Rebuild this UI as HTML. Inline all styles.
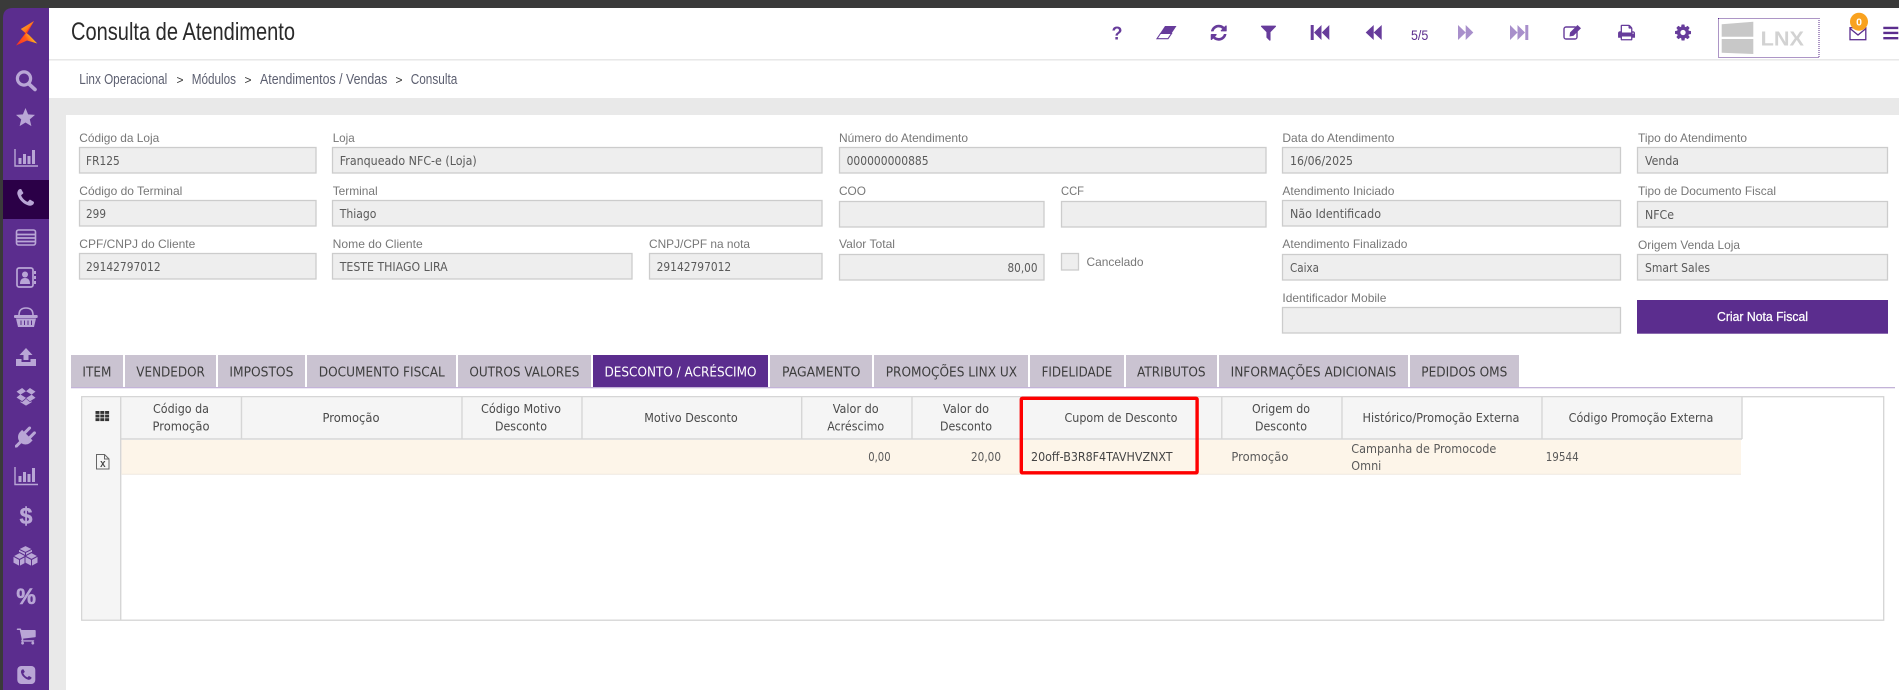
<!DOCTYPE html>
<html lang="pt-BR">
<head>
<meta charset="utf-8">
<title>Consulta de Atendimento</title>
<style>
html,body{margin:0;padding:0;background:#fff;width:1899px;height:690px;overflow:hidden}
svg{display:block}
.l{font:12px "Liberation Sans",sans-serif;fill:#777}
.v{font:12px "DejaVu Sans","Liberation Sans",sans-serif;fill:#5a5a5a}
.tab{font:13px "DejaVu Sans","Liberation Sans",sans-serif;fill:#3d3d3d}
.h{font:12px "DejaVu Sans","Liberation Sans",sans-serif;fill:#4a4a4a}
.b{font:15px "Liberation Sans",sans-serif;fill:#5c5f70}
.i{fill:#eee;stroke:#ccc;stroke-width:1.3}
.t{fill:#cac3d1}
.s{fill:#b9a6d6}
.p{fill:#673c9b}
.q{fill:#a88fcb}
.ln{stroke:#d6d6d6;stroke-width:1.4}
</style>
</head>
<body>
<svg xmlns="http://www.w3.org/2000/svg" width="1899" height="690" viewBox="0 0 1899 690">
<defs>
<linearGradient id="g1" x1="0" y1="1" x2="1" y2="0.6"><stop offset="0" stop-color="#ff2d1e"/><stop offset=".6" stop-color="#ff5a1e"/><stop offset="1" stop-color="#ffd21e"/></linearGradient>
<linearGradient id="g2" x1="0" y1="0" x2="1" y2="1"><stop offset="0" stop-color="#ffc21e"/><stop offset="1" stop-color="#ff3a1e"/></linearGradient>
</defs>

<!-- chrome -->
<rect width="1899" height="690" fill="#fff"/>
<rect width="1899" height="8" fill="#3a3a3a"/>
<rect y="0" width="3" height="690" fill="#3a3a3a"/>
<rect x="3" y="8" width="10" height="10" fill="#3a3a3a"/>
<path d="M3 690V18q0-10 10-10H49V690z" fill="#5b2d8e"/>
<rect x="3" y="180" width="46" height="39" fill="#2b0047"/>

<!-- header -->
<rect x="49" y="59" width="1850" height="1.6" fill="#e8e8e8"/>
<rect x="49" y="98" width="1850" height="592" fill="#e9e9e9"/>
<rect x="66" y="115" width="1833" height="575" fill="#fff"/>
<text x="71" y="40" textLength="224" lengthAdjust="spacingAndGlyphs" style="font:25px 'Liberation Sans',sans-serif;fill:#2a2a2a">Consulta de Atendimento</text>

<text class="b" x="79.3" y="84" textLength="88" lengthAdjust="spacingAndGlyphs">Linx Operacional</text>
<text class="b" x="176.5" y="84" textLength="7" lengthAdjust="spacingAndGlyphs" style="font-size:12px;fill:#333">&gt;</text>
<text class="b" x="191.7" y="84" textLength="44.3" lengthAdjust="spacingAndGlyphs">Módulos</text>
<text class="b" x="244.5" y="84" textLength="7" lengthAdjust="spacingAndGlyphs" style="font-size:12px;fill:#333">&gt;</text>
<text class="b" x="260" y="84" textLength="127.3" lengthAdjust="spacingAndGlyphs">Atendimentos / Vendas</text>
<text class="b" x="395.5" y="84" textLength="7" lengthAdjust="spacingAndGlyphs" style="font-size:12px;fill:#333">&gt;</text>
<text class="b" x="410.7" y="84" textLength="46.6" lengthAdjust="spacingAndGlyphs">Consulta</text>

<!-- sidebar icons -->
<polygon points="34,21 20.8,29 26.5,34" fill="url(#g2)"/>
<polygon points="34,21 26.5,34 16,45.5 24,35" fill="#ff3a1e"/>
<polygon points="26.5,33 16,45.5 27,40.5 37.3,43.5 29,35" fill="url(#g1)"/>
<circle cx="24" cy="78.5" r="6.6" fill="none" stroke="#b9a6d6" stroke-width="3.2"/>
<path d="M29 84l6 5.5" stroke="#b9a6d6" stroke-width="3.6" stroke-linecap="round"/>
<polygon class="s" points="25.5,108 28.1,114.4 35,114.9 29.8,119.4 31.4,126.1 25.5,122.5 19.6,126.1 21.2,119.4 16,114.9 22.9,114.4"/>
<path d="M15 149v17h23" fill="none" stroke="#b9a6d6" stroke-width="1.4"/>
<path class="s" d="M18.5 158h3v6h-3zM23 154h3v10h-3zM27.5 156h3v8h-3zM32 150h3v14h-3z"/>
<path class="s" transform="translate(15 187.5) scale(.01186)" d="M1600 1240q0 27-10 70.5t-21 68.5q-21 50-122 106-94 51-186 51-27 0-53-3.5t-57.5-12.5-47-14.5-55.5-20.5-49-18q-98-35-175-83-127-79-264-216t-216-264q-48-77-83-175-3-9-18-49t-20.5-55.5-14.5-47-12.5-57.5-3.5-53q0-92 51-186 56-101 106-122 25-11 68.5-21t70.5-10q14 0 21 3 18 6 53 76 11 19 30 54t35 63.5 31 53.5q3 4 17.5 25t21.5 35.5 7 28.5q0 20-28.5 50t-62 55-62 53-28.5 46q0 9 5 22.5t8.5 20.5 14 24 11.5 19q76 137 174 235t235 174q2 1 19 11.5t24 14 20.5 8.5 22.5 5q18 0 46-28.5t53-62 55-62 50-28.5q14 0 28.5 7t35.5 21.5 25 17.5q25 15 53.5 31t63.5 35 54 30q70 35 76 53 3 7 3 21z"/>
<!-- list icon -->
<rect x="16.5" y="230" width="19" height="15" rx="2" fill="none" stroke="#b9a6d6" stroke-width="1.6"/>
<path d="M17 234.5h18M17 238h18M17 241.5h18" stroke="#b9a6d6" stroke-width="1.8"/>
<!-- contacts -->
<rect x="17" y="268" width="16" height="19" rx="2" fill="none" stroke="#b9a6d6" stroke-width="1.7"/>
<circle cx="25" cy="274.5" r="3" class="s"/>
<path class="s" d="M20 284q0-6 5-6t5 6zM34 271h2v3h-2zM34 276h2v3h-2zM34 281h2v3h-2z"/>
<!-- basket -->
<path d="M19 315q0-7 7-7t7 7" fill="none" stroke="#b9a6d6" stroke-width="1.6"/>
<rect x="14" y="315" width="23.7" height="3" rx="1" class="s"/>
<polygon class="s" points="16,318.5 36,318.5 34,327 18,327"/>
<path d="M21 320.5v4.5M24.5 320.5v4.5M28 320.5v4.5M31.5 320.5v4.5" stroke="#5b2d8e" stroke-width="1"/>
<!-- upload -->
<path class="s" d="M26 348l6.5 7h-4v5h-5v-5h-4zM16 359h5.5v3h9v-3h5.5v7h-20z"/>
<!-- dropbox -->
<path class="s" transform="translate(15.8 386.3) scale(.0114)" d="M402 707l494 305-342 285-490-319zm986 589v108l-490 293v1l-1-1-1 1v-1l-489-293v-108l147 96 342-284v-2l1 1 1-1v2l343 284zm-834-1151l342 285-494 304-338-270zm836 589l338 271-489 319-343-285zm-151-589l489 319-338 270-494-304z"/>
<!-- plug -->
<path class="s" transform="translate(15 426.5) scale(.0117)" d="M1755 453q37 38 37 90.5t-37 90.5l-401 400 150 150-160 160q-163 163-389.5 186.5t-411.5-100.5l-362 362h-181v-181l362-362q-124-185-100.5-411.5t186.5-389.5l160-160 150 150 400-401q38-37 91-37t90 37 37 90.5-37 90.5l-400 401 234 234 401-400q38-37 91-37t90 37z"/>
<!-- chart 2 -->
<path d="M15 467v17.5h23" fill="none" stroke="#b9a6d6" stroke-width="1.4"/>
<path class="s" d="M18.5 476h3v6h-3zM23 472h3v10h-3zM27.5 474h3v8h-3zM32 468h3v14h-3z"/>
<text x="26" y="524" text-anchor="middle" stroke="#b9a6d6" stroke-width=".5" style="font:bold 23px 'Liberation Sans',sans-serif;fill:#b9a6d6">$</text>
<!-- cubes -->
<g class="s" stroke="#5b2d8e" stroke-width="1">
<polygon points="25.5,545.5 32.5,549 32.5,556 25.5,559.5 18.5,556 18.5,549"/>
<path fill="none" d="M18.5 549l7 3.5 7-3.5M25.500 552.500v7"/>
<polygon points="19.5,552.5 26,556 26,563 19.5,566.500 13,563 13,556"/>
<path fill="none" d="M13 556l6.500 3.500 6.500-3.500M19.500 559.500v7"/>
<polygon points="31.5,552.5 38,556 38,563 31.5,566.500 25,563 25,556"/>
<path fill="none" d="M25 556l6.500 3.500 6.500-3.500M31.500 559.500v7"/>
</g>
<text x="26.2" y="604" text-anchor="middle" stroke="#b9a6d6" stroke-width=".6" style="font:bold 22px 'Liberation Sans',sans-serif;fill:#b9a6d6">%</text>
<path class="s" transform="translate(16 625.6) scale(.0114)" d="M704 1536q0 52-38 90t-90 38-90-38-38-90 38-90 90-38 90 38 38 90zm896 0q0 52-38 90t-90 38-90-38-38-90 38-90 90-38 90 38 38 90zm128-1088v512q0 24-16.5 42.5t-40.5 21.5l-1044 122q13 60 13 70 0 16-24 64h920q26 0 45 19t19 45-19 45-45 19h-1024q-26 0-45-19t-19-45q0-11 8-31.5t16-36 21.5-40 15.5-29.5l-177-823h-204q-26 0-45-19t-19-45 19-45 45-19h256q16 0 28.5 6.5t19.5 15.5 13 24.5 8 26 5.5 29.5 4.5 26h1201q26 0 45 19t19 45z"/>
<rect x="17.3" y="666" width="18" height="18" rx="4" class="s"/>
<path fill="#5b2d8e" transform="translate(19.5 668.3) scale(.0075)" d="M1600 1240q0 27-10 70.5t-21 68.5q-21 50-122 106-94 51-186 51-27 0-53-3.5t-57.5-12.5-47-14.5-55.5-20.5-49-18q-98-35-175-83-127-79-264-216t-216-264q-48-77-83-175-3-9-18-49t-20.5-55.5-14.5-47-12.5-57.5-3.5-53q0-92 51-186 56-101 106-122 25-11 68.5-21t70.5-10q14 0 21 3 18 6 53 76 11 19 30 54t35 63.5 31 53.5q3 4 17.5 25t21.5 35.5 7 28.5q0 20-28.5 50t-62 55-62 53-28.5 46q0 9 5 22.5t8.5 20.5 14 24 11.5 19q76 137 174 235t235 174q2 1 19 11.5t24 14 20.5 8.5 22.5 5q18 0 46-28.5t53-62 55-62 50-28.5q14 0 28.5 7t35.5 21.5 25 17.5q25 15 53.5 31t63.5 35 54 30q70 35 76 53 3 7 3 21z"/>

<!-- toolbar -->
<text x="1117" y="39.5" text-anchor="middle" style="font:bold 18px 'Liberation Sans',sans-serif;fill:#673c9b">?</text>
<path class="p" d="M1165 26H1176.500l-5 7.500h-11.500z"/>
<path d="M1160.500 33.500h11l-3.500 5.200h-11z" fill="none" stroke="#673c9b" stroke-width="1.1"/>
<path class="p" transform="translate(1209.4 23.4) scale(.0104)" d="M1639 1056q0 5-1 7-64 268-268 434.500t-478 166.500q-146 0-282.500-55t-243.500-157l-129 129q-19 19-45 19t-45-19-19-45v-448q0-26 19-45t45-19h448q26 0 45 19t19 45-19 45l-137 137q71 66 161 102t187 36q134 0 250-65t186-179q11-17 53-117 8-23 30-23h192q13 0 22.500 9.500t9.500 22.500zm25-800v448q0 26-19 45t-45 19h-448q-26 0-45-19t-19-45 19-45l138-138q-148-137-349-137-134 0-250 65t-186 179q-11 17-53 117-8 23-30 23h-199q-13 0-22.500-9.500t-9.500-22.500v-7q65-268 270-434.500t480-166.500q146 0 284 55.500t245 156.500l130-129q19-19 45-19t45 19 19 45z"/>
<path class="p" transform="translate(1258.9 22.9) scale(.0107)" d="M1595 295q17 41-14 70l-493 493v742q0 42-39 59-13 5-25 5-27 0-45-19l-256-256q-19-19-19-45v-486l-493-493q-31-29-14-70 17-39 59-39h1280q42 0 59 39z"/>
<path class="p" d="M1310.700 25h3v15h-3zM1314 32.500l7.500-7.500v15zM1321.800 32.500l7.500-7.500v15z"/>
<path class="p" d="M1365.700 32.500l8-7.500v15zM1373.700 32.500l8-7.500v15z"/>
<text x="1411" y="40" textLength="17.3" lengthAdjust="spacingAndGlyphs" style="font:14px 'Liberation Sans',sans-serif;fill:#5b2d8e">5/5</text>
<path class="q" d="M1458 25l7.700 7.500-7.700 7.500zM1465.700 25l7.600 7.500-7.600 7.500z"/>
<path class="q" d="M1510 25l7.500 7.500-7.500 7.500zM1517.500 25l7.500 7.500-7.500 7.500zM1525.300 25h3v15h-3z"/>
<rect x="1564" y="27" width="13" height="12" rx="2" fill="none" stroke="#673c9b" stroke-width="1.4"/>
<path class="p" d="M1570 32.500l7.500-7.500 3.500 3.200-7.500 7.500-4 .8z"/>
<path class="p" transform="translate(1617.4 23.4) scale(.0102)" d="M448 1536h896v-256h-896v256zm0-640h896v-384h-160q-40 0-68-28t-28-68v-160h-640v640zm1152 64q0-26-19-45t-45-19-45 19-19 45 19 45 45 19 45-19 19-45zm128 0v416q0 13-9.500 22.500t-22.500 9.500h-224v160q0 40-28 68t-68 28h-960q-40 0-68-28t-28-68v-160h-224q-13 0-22.500-9.500t-9.500-22.500v-416q0-79 56.500-135.500t135.500-56.500h64v-544q0-40 28-68t68-28h672q40 0 88 20t76 48l152 152q28 28 48 76t20 88v256h64q79 0 135.500 56.500t56.500 135.500z"/>
<path class="p" fill-rule="evenodd" transform="translate(1673.7 23.2) scale(.0104)" d="M1152 896q0-106-75-181t-181-75-181 75-75 181 75 181 181 75 181-75 75-181zm512-109v222q0 12-8 23t-20 13l-185 28q-19 54-39 91 35 50 107 138 10 12 10 25t-9 23q-27 37-99 108t-94 71q-12 0-26-9l-138-108q-44 23-91 38-16 136-29 186-7 28-36 28h-222q-14 0-24.500-8.500t-11.500-21.500l-28-184q-49-16-90-37l-141 107q-10 9-25 9-14 0-25-11-126-114-165-168-7-10-7-23 0-12 8-23 15-21 51-66.500t54-70.500q-27-50-41-99l-183-27q-13-2-21-12.500t-8-23.500v-222q0-12 8-23t19-13l186-28q14-46 39-92-40-57-107-138-10-12-10-24 0-10 9-23 26-36 98.500-107.500t94.500-71.500q13 0 26 10l138 107q44-23 91-38 16-136 29-186 7-28 36-28h222q14 0 24.500 8.500t11.500 21.500l28 184q49 16 90 37l142-107q9-9 24-9 13 0 25 10 129 119 165 170 7 8 7 22 0 12-8 23-15 21-51 66.500t-54 70.500q26 50 41 98l183 28q13 2 21 12.500t8 23.500z"/>
<!-- LNX -->
<rect x="1718.500" y="18.500" width="100.500" height="39" fill="none" stroke="#5b2d8e" stroke-width="1" stroke-dasharray="1 1"/>
<polygon points="1721.700,24.300 1753.300,21.700 1753.300,36.700 1721.700,36.700" fill="#c8c8c8"/>
<polygon points="1721.700,39 1753.300,39 1753.300,54 1721.700,52.700" fill="#c8c8c8"/>
<text x="1760.700" y="45.700" textLength="43.300" lengthAdjust="spacingAndGlyphs" style="font:bold 20px 'Liberation Sans',sans-serif;fill:#d2d2d2">LNX</text>
<!-- mail -->
<rect x="1850" y="27.700" width="15.800" height="12" fill="none" stroke="#5b2d8e" stroke-width="1.3"/>
<path d="M1850 28.500l8 6.500 8-6.500" fill="none" stroke="#5b2d8e" stroke-width="1.3"/>
<circle cx="1859" cy="21.700" r="9" fill="#f9a21f"/>
<text x="1859" y="25.500" text-anchor="middle" style="font:bold 10.500px 'Liberation Sans',sans-serif;fill:#fff">0</text>
<path fill="#5b2d8e" d="M1883.300 26.700h15v2.400h-15zM1883.300 31.700h15v2.400h-15zM1883.300 37h15v2.400h-15z"/>

<!-- form labels -->
<text class="l" x="79.300" y="142" textLength="80" lengthAdjust="spacingAndGlyphs">Código da Loja</text>
<text class="l" x="332.700" y="142" textLength="22" lengthAdjust="spacingAndGlyphs">Loja</text>
<text class="l" x="839" y="142" textLength="129" lengthAdjust="spacingAndGlyphs">Número do Atendimento</text>
<text class="l" x="1282.400" y="142" textLength="112" lengthAdjust="spacingAndGlyphs">Data do Atendimento</text>
<text class="l" x="1638" y="142" textLength="109" lengthAdjust="spacingAndGlyphs">Tipo do Atendimento</text>

<text class="l" x="79.300" y="195" textLength="103" lengthAdjust="spacingAndGlyphs">Código do Terminal</text>
<text class="l" x="332.700" y="195" textLength="45" lengthAdjust="spacingAndGlyphs">Terminal</text>
<text class="l" x="839" y="195" textLength="27" lengthAdjust="spacingAndGlyphs">COO</text>
<text class="l" x="1061" y="195" textLength="23" lengthAdjust="spacingAndGlyphs">CCF</text>
<text class="l" x="1282.400" y="195" textLength="112" lengthAdjust="spacingAndGlyphs">Atendimento Iniciado</text>
<text class="l" x="1638" y="195" textLength="138" lengthAdjust="spacingAndGlyphs">Tipo de Documento Fiscal</text>

<text class="l" x="79.300" y="248" textLength="116" lengthAdjust="spacingAndGlyphs">CPF/CNPJ do Cliente</text>
<text class="l" x="332.700" y="248" textLength="90" lengthAdjust="spacingAndGlyphs">Nome do Cliente</text>
<text class="l" x="649" y="248" textLength="101" lengthAdjust="spacingAndGlyphs">CNPJ/CPF na nota</text>
<text class="l" x="839" y="248" textLength="56" lengthAdjust="spacingAndGlyphs">Valor Total</text>
<text class="l" x="1282.400" y="248" textLength="125" lengthAdjust="spacingAndGlyphs">Atendimento Finalizado</text>
<text class="l" x="1638" y="249" textLength="102" lengthAdjust="spacingAndGlyphs">Origem Venda Loja</text>
<text class="l" x="1282.400" y="302" textLength="104" lengthAdjust="spacingAndGlyphs">Identificador Mobile</text>

<!-- inputs -->
<rect class="i" x="79.500" y="147.500" width="236.500" height="25.500"/>
<rect class="i" x="332.500" y="147.500" width="489.500" height="25.500"/>
<rect class="i" x="839.500" y="147.500" width="426.500" height="25.500"/>
<rect class="i" x="1282.500" y="147.500" width="338" height="25.500"/>
<rect class="i" x="1637.500" y="147.500" width="250" height="25.500"/>

<rect class="i" x="79.500" y="200.500" width="236.500" height="25.500"/>
<rect class="i" x="332.500" y="200.500" width="489.500" height="25.500"/>
<rect class="i" x="839.500" y="201.500" width="204.500" height="25.500"/>
<rect class="i" x="1061.500" y="201.500" width="204.500" height="25.500"/>
<rect class="i" x="1282.500" y="200.500" width="338" height="25.500"/>
<rect class="i" x="1637.500" y="201.500" width="250" height="25.500"/>

<rect class="i" x="79.500" y="253.500" width="236.500" height="25.500"/>
<rect class="i" x="332.500" y="253.500" width="299.500" height="25.500"/>
<rect class="i" x="649.500" y="253.500" width="172.500" height="25.500"/>
<rect class="i" x="839.500" y="254.500" width="204.500" height="25.500"/>
<rect class="i" x="1282.500" y="254.500" width="338" height="25.500"/>
<rect class="i" x="1637.500" y="254.500" width="250" height="25.500"/>
<rect class="i" x="1282.500" y="307.500" width="338" height="25.500"/>

<rect class="i" x="1061.500" y="253.500" width="17" height="16.500"/>
<text class="l" x="1086.500" y="266" textLength="57" lengthAdjust="spacingAndGlyphs">Cancelado</text>

<rect x="1637" y="300" width="251" height="33.700" fill="#5b2d8e"/>
<text x="1717" y="321" textLength="91" lengthAdjust="spacingAndGlyphs" stroke="#fff" stroke-width=".25" style="font:12.500px 'Liberation Sans',sans-serif;fill:#fff">Criar Nota Fiscal</text>

<!-- input values -->
<text class="v" x="86" y="165" textLength="33.700" lengthAdjust="spacingAndGlyphs">FR125</text>
<text class="v" x="339.700" y="165" textLength="137" lengthAdjust="spacingAndGlyphs">Franqueado NFC-e (Loja)</text>
<text class="v" x="846.600" y="165" textLength="82" lengthAdjust="spacingAndGlyphs">000000000885</text>
<text class="v" x="1290" y="165" textLength="63" lengthAdjust="spacingAndGlyphs">16/06/2025</text>
<text class="v" x="1645" y="165" textLength="34" lengthAdjust="spacingAndGlyphs">Venda</text>
<text class="v" x="86" y="218" textLength="20" lengthAdjust="spacingAndGlyphs">299</text>
<text class="v" x="339.700" y="218" textLength="36.700" lengthAdjust="spacingAndGlyphs">Thiago</text>
<text class="v" x="1290" y="218" textLength="91" lengthAdjust="spacingAndGlyphs">Não Identificado</text>
<text class="v" x="1645" y="219" textLength="29" lengthAdjust="spacingAndGlyphs">NFCe</text>
<text class="v" x="86" y="271" textLength="74.600" lengthAdjust="spacingAndGlyphs">29142797012</text>
<text class="v" x="339.700" y="271" textLength="108" lengthAdjust="spacingAndGlyphs">TESTE THIAGO LIRA</text>
<text class="v" x="656.600" y="271" textLength="74.600" lengthAdjust="spacingAndGlyphs">29142797012</text>
<text class="v" x="1007.500" y="272" textLength="30" lengthAdjust="spacingAndGlyphs">80,00</text>
<text class="v" x="1290" y="272" textLength="29" lengthAdjust="spacingAndGlyphs">Caixa</text>
<text class="v" x="1645" y="272" textLength="65" lengthAdjust="spacingAndGlyphs">Smart Sales</text>

<!-- tabs -->
<rect class="t" x="71" y="355" width="52" height="32"/>
<rect class="t" x="125" y="355" width="91" height="32"/>
<rect class="t" x="218" y="355" width="87" height="32"/>
<rect class="t" x="307" y="355" width="149" height="32"/>
<rect class="t" x="458" y="355" width="133" height="32"/>
<rect x="593" y="355" width="175" height="32" fill="#5b2d8e"/>
<rect class="t" x="770" y="355" width="102" height="32"/>
<rect class="t" x="874" y="355" width="154" height="32"/>
<rect class="t" x="1030" y="355" width="94" height="32"/>
<rect class="t" x="1126" y="355" width="91" height="32"/>
<rect class="t" x="1219" y="355" width="189" height="32"/>
<rect class="t" x="1410" y="355" width="109" height="32"/>
<rect x="71" y="387" width="1824" height="1.300" fill="#c3b3d8"/>
<text class="tab" x="82.400" y="376.500" textLength="29" lengthAdjust="spacingAndGlyphs">ITEM</text>
<text class="tab" x="136.300" y="376.500" textLength="68.600" lengthAdjust="spacingAndGlyphs">VENDEDOR</text>
<text class="tab" x="229.400" y="376.500" textLength="64" lengthAdjust="spacingAndGlyphs">IMPOSTOS</text>
<text class="tab" x="318.800" y="376.500" textLength="126" lengthAdjust="spacingAndGlyphs">DOCUMENTO FISCAL</text>
<text class="tab" x="469.400" y="376.500" textLength="110" lengthAdjust="spacingAndGlyphs">OUTROS VALORES</text>
<text class="tab" x="604.500" y="376.500" textLength="152" lengthAdjust="spacingAndGlyphs" style="fill:#fff">DESCONTO / ACRÉSCIMO</text>
<text class="tab" x="782" y="376.500" textLength="78.400" lengthAdjust="spacingAndGlyphs">PAGAMENTO</text>
<text class="tab" x="885.700" y="376.500" textLength="131.400" lengthAdjust="spacingAndGlyphs">PROMOÇÕES LINX UX</text>
<text class="tab" x="1041.600" y="376.500" textLength="70.600" lengthAdjust="spacingAndGlyphs">FIDELIDADE</text>
<text class="tab" x="1137" y="376.500" textLength="68.600" lengthAdjust="spacingAndGlyphs">ATRIBUTOS</text>
<text class="tab" x="1230.600" y="376.500" textLength="165.700" lengthAdjust="spacingAndGlyphs">INFORMAÇÕES ADICIONAIS</text>
<text class="tab" x="1421.300" y="376.500" textLength="86" lengthAdjust="spacingAndGlyphs">PEDIDOS OMS</text>

<!-- grid -->
<rect x="81.700" y="396.700" width="1802" height="223.500" fill="#fff" stroke="#d4d4d4" stroke-width="1.300"/>
<rect x="82.400" y="397.400" width="38" height="222" fill="#f5f5f5"/>
<rect x="120.400" y="397.400" width="1621" height="41.600" fill="#f5f5f5"/>
<rect x="121" y="440" width="1620" height="34" fill="#fdf5e9"/>
<path class="ln" d="M120.700 396.700V620M120.500 439H1742M1742 396.700V439M241.500 396.700V439M462 396.700V439M582 396.700V439M801.700 396.700V439M912 396.700V439M1021 396.700V439M1221.800 396.700V439M1342 396.700V439M1542 396.700V439"/>
<path d="M121 474.300H1741" stroke="#efe9e0" stroke-width="1"/>

<g fill="#333">
<rect x="95.500" y="411" width="4" height="2.900"/><rect x="100.300" y="411" width="4" height="2.900"/><rect x="105.100" y="411" width="4" height="2.900"/>
<rect x="95.500" y="414.600" width="4" height="2.900"/><rect x="100.300" y="414.600" width="4" height="2.900"/><rect x="105.100" y="414.600" width="4" height="2.900"/>
<rect x="95.500" y="418.200" width="4" height="2.900"/><rect x="100.300" y="418.200" width="4" height="2.900"/><rect x="105.100" y="418.200" width="4" height="2.900"/>
</g>
<path d="M96.500 454.500h8l4.500 4.500v10h-12.500zM104.500 454.500v4.500h4.500" fill="none" stroke="#666" stroke-width="1"/>
<text x="102.800" y="467" text-anchor="middle" style="font:bold 9px 'Liberation Mono',monospace;fill:#444">X</text>

<text class="h" x="181" y="413" text-anchor="middle" textLength="56" lengthAdjust="spacingAndGlyphs">Código da</text>
<text class="h" x="181" y="430.500" text-anchor="middle" textLength="57" lengthAdjust="spacingAndGlyphs">Promoção</text>
<text class="h" x="351" y="422" text-anchor="middle" textLength="57" lengthAdjust="spacingAndGlyphs">Promoção</text>
<text class="h" x="521" y="413" text-anchor="middle" textLength="80" lengthAdjust="spacingAndGlyphs">Código Motivo</text>
<text class="h" x="521" y="430.500" text-anchor="middle" textLength="52" lengthAdjust="spacingAndGlyphs">Desconto</text>
<text class="h" x="691" y="422" text-anchor="middle" textLength="93.500" lengthAdjust="spacingAndGlyphs">Motivo Desconto</text>
<text class="h" x="855.700" y="413" text-anchor="middle" textLength="46" lengthAdjust="spacingAndGlyphs">Valor do</text>
<text class="h" x="855.700" y="430.500" text-anchor="middle" textLength="57" lengthAdjust="spacingAndGlyphs">Acréscimo</text>
<text class="h" x="966" y="413" text-anchor="middle" textLength="46" lengthAdjust="spacingAndGlyphs">Valor do</text>
<text class="h" x="966" y="430.500" text-anchor="middle" textLength="52" lengthAdjust="spacingAndGlyphs">Desconto</text>
<text class="h" x="1121" y="422" text-anchor="middle" textLength="113" lengthAdjust="spacingAndGlyphs">Cupom de Desconto</text>
<text class="h" x="1281" y="413" text-anchor="middle" textLength="58" lengthAdjust="spacingAndGlyphs">Origem do</text>
<text class="h" x="1281" y="430.500" text-anchor="middle" textLength="52" lengthAdjust="spacingAndGlyphs">Desconto</text>
<text class="h" x="1441" y="422" text-anchor="middle" textLength="157" lengthAdjust="spacingAndGlyphs">Histórico/Promoção Externa</text>
<text class="h" x="1641" y="422" text-anchor="middle" textLength="144.700" lengthAdjust="spacingAndGlyphs">Código Promoção Externa</text>

<text class="v" x="868.200" y="461" textLength="22.400" lengthAdjust="spacingAndGlyphs">0,00</text>
<text class="v" x="971" y="461" textLength="30" lengthAdjust="spacingAndGlyphs">20,00</text>
<text class="v" x="1031" y="461" textLength="141.600" lengthAdjust="spacingAndGlyphs" style="fill:#444">20off-B3R8F4TAVHVZNXT</text>
<text class="v" x="1231.400" y="461" textLength="57" lengthAdjust="spacingAndGlyphs">Promoção</text>
<text class="v" x="1351.300" y="453" textLength="145" lengthAdjust="spacingAndGlyphs">Campanha de Promocode</text>
<text class="v" x="1351.300" y="470" textLength="30" lengthAdjust="spacingAndGlyphs">Omni</text>
<text class="v" x="1545.700" y="461" textLength="33" lengthAdjust="spacingAndGlyphs">19544</text>

<!-- highlight -->
<rect x="1021.300" y="398.300" width="175.800" height="74.500" rx="1" fill="none" stroke="#fe0000" stroke-width="3.400"/>
</svg>
</body>
</html>
